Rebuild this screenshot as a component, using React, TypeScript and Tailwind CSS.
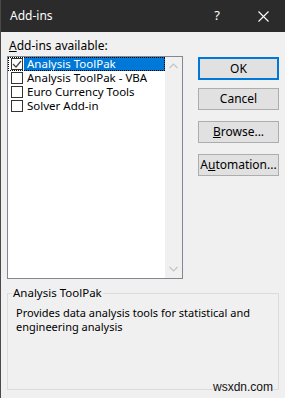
import React from "react";

const addins = [
  { name: "Analysis ToolPak", checked: true },
  { name: "Analysis ToolPak - VBA", checked: false },
  { name: "Euro Currency Tools", checked: false },
  { name: "Solver Add-in", checked: false },
];

function Checkbox({ checked }: { checked: boolean }) {
  return (
    <div className="w-[12px] h-[12px] border border-[#333333] bg-white flex items-center justify-center shrink-0">
      {checked && (
        <svg width="10" height="10" viewBox="0 0 10 10">
          <path d="M1 5 L4 8 L9 2" stroke="#444" strokeWidth="1.2" fill="none" />
        </svg>
      )}
    </div>
  );
}

function DlgButton({ children, primary }: { children: React.ReactNode; primary?: boolean }) {
  return (
    <button
      className={
        primary
          ? "w-[81px] h-[23px] bg-[#e1e1e1] border-2 border-[#0078d7] text-[12px] text-black leading-none"
          : "w-[81px] h-[22px] bg-[#e1e1e1] border border-[#adadad] text-[12px] text-black leading-none"
      }
    >
      {children}
    </button>
  );
}

export default function App() {
  return (
    <div
      className="relative w-[285px] h-[398px] bg-[#f0f0f0] border-l border-[#4a4a4a] flex flex-col overflow-hidden"
      style={{ fontFamily: '"Noto Sans", "Open Sans", sans-serif' }}
    >
      {/* Title bar */}
      <div className="h-[32px] bg-[#2b2b2b] flex items-center text-white shrink-0">
        <span className="ml-[9px] text-[12px]">Add-ins</span>
        <span className="ml-auto mr-[38px] text-[13px]">?</span>
        <svg className="mr-[16px]" width="11" height="11" viewBox="0 0 11 11">
          <path d="M0.5 0.5 L10.5 10.5 M10.5 0.5 L0.5 10.5" stroke="#fff" strokeWidth="1.1" />
        </svg>
      </div>

      <div className="flex pl-[6px] pt-[6px]">
        {/* Left: list */}
        <div className="flex flex-col">
          <div className="h-[18px] text-[12px] text-black leading-[16px] pl-[2px]">
            <u>A</u>dd-ins available:
          </div>
          <div className="w-[176px] h-[223px] border border-[#828790] bg-white flex">
            <div className="flex-1 flex flex-col">
              {addins.map((a, i) => (
                <div
                  key={a.name}
                  className={
                    i === 0
                      ? "h-[14px] flex items-center outline outline-1 outline-dotted outline-black -outline-offset-1"
                      : "h-[14px] flex items-center"
                  }
                >
                  <div className="ml-[3px]">
                    <Checkbox checked={a.checked} />
                  </div>
                  <div
                    className={
                      i === 0
                        ? "ml-[1px] h-full flex-1 flex items-center bg-[#0078d7] text-white text-[11.5px] leading-[14px] pl-[3px]"
                        : "ml-[1px] h-full flex-1 flex items-center text-black text-[11.5px] leading-[14px] pl-[3px]"
                    }
                  >
                    {a.name}
                  </div>
                </div>
              ))}
            </div>
            {/* Scrollbar */}
            <div className="w-[17px] bg-[#f0f0f0] flex flex-col items-center justify-between py-[6px]">
              <svg width="9" height="6" viewBox="0 0 9 6">
                <path d="M0.5 5 L4.5 1 L8.5 5" stroke="#c4c4c4" strokeWidth="1.2" fill="none" />
              </svg>
              <svg width="9" height="6" viewBox="0 0 9 6">
                <path d="M0.5 1 L4.5 5 L8.5 1" stroke="#c4c4c4" strokeWidth="1.2" fill="none" />
              </svg>
            </div>
          </div>
        </div>

        {/* Right: buttons */}
        <div className="ml-[15px] mt-[19px] flex flex-col">
          <DlgButton primary>OK</DlgButton>
          <div className="mt-[5px]">
            <DlgButton>Cancel</DlgButton>
          </div>
          <div className="mt-[8px]">
            <DlgButton>
              <u>B</u>rowse...
            </DlgButton>
          </div>
          <div className="mt-[8px]">
            <DlgButton>
              A<u>u</u>tomation...
            </DlgButton>
          </div>
        </div>
      </div>

      {/* Group box */}
      <div className="relative ml-[6px] mt-[14px] w-[272px] h-[97px] border border-[#dcdcdc]">
        <span className="absolute left-[4px] -top-[9px] bg-[#f0f0f0] text-[11.5px] text-black px-[1px] leading-[16px]">
          Analysis ToolPak
        </span>
        <p className="mt-[12px] ml-[8px] mr-[6px] text-[11px] leading-[14px] text-black">
          Provides data analysis tools for statistical and engineering analysis
        </p>
      </div>

      <span
        className="absolute left-[212px] top-[380px] bg-[#f0f0f0] text-[12px] leading-[14px] text-[#111]"
        style={{ fontFamily: '"Liberation Sans", Arial, sans-serif' }}
      >
        wsxdn.com
      </span>
    </div>
  );
}
